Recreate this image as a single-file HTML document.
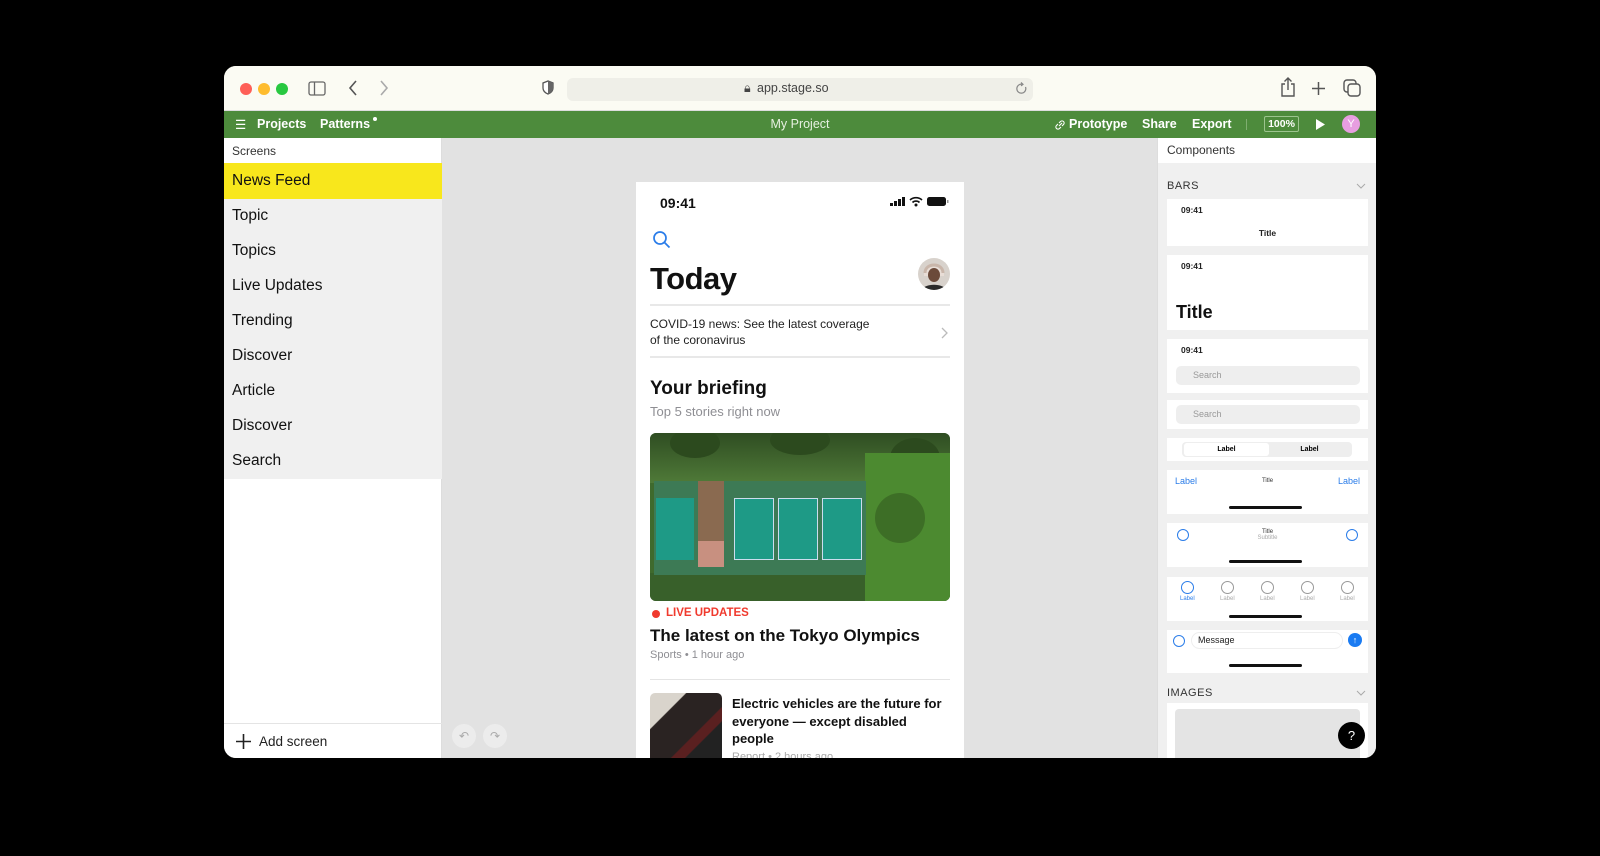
<!DOCTYPE html>
<html><head><meta charset="utf-8"><style>
*{box-sizing:border-box;margin:0;padding:0}
body{width:1600px;height:856px;background:#000;font-family:"Liberation Sans",sans-serif;position:relative;overflow:hidden}
.a{position:absolute}
.win{left:224px;top:66px;width:1152px;height:692px;border-radius:12px;overflow:hidden;background:#fcfcf5}
.g{color:#fff;font-size:12.5px;top:6px;font-weight:bold}
.side div.it{position:absolute;left:8px;font-size:15.5px;color:#111}
.card{position:absolute;left:9px;width:201px;background:#fff}
.sb{font-size:8.5px;font-weight:bold;color:#222}
.circ{position:absolute;width:12px;height:12px;border:1.5px solid #2b7de9;border-radius:50%}
.gc{border-color:#999}
.hb{position:absolute;left:62px;width:73px;height:3px;background:#111;border-radius:2px}
.lbl{position:absolute;font-size:6px;color:#aaa}
.tr{position:absolute;border-radius:50%;background:#2c4a1e}
</style></head><body>
<div class="a win">
 <div class="a" style="left:0;top:0;width:1152px;height:45px;background:#fbfbf3;border-bottom:1px solid #ddd"></div>
 <div class="a" style="left:16px;top:17px;width:12px;height:12px;border-radius:50%;background:#fe5f57"></div>
 <div class="a" style="left:34px;top:17px;width:12px;height:12px;border-radius:50%;background:#febc2e"></div>
 <div class="a" style="left:52px;top:17px;width:12px;height:12px;border-radius:50%;background:#28c840"></div>
 <svg class="a" style="left:84px;top:15px" width="18" height="15"><rect x="1" y="1" width="16" height="13" rx="2" fill="none" stroke="#666" stroke-width="1.3"/><line x1="6.5" y1="1" x2="6.5" y2="14" stroke="#666" stroke-width="1.3"/></svg>
 <svg class="a" style="left:124px;top:14px" width="10" height="16"><path d="M8 1L2 8l6 7" fill="none" stroke="#555" stroke-width="1.6"/></svg>
 <svg class="a" style="left:155px;top:14px" width="10" height="16"><path d="M2 1l6 7-6 7" fill="none" stroke="#aaa" stroke-width="1.6"/></svg>
 <svg class="a" style="left:318px;top:14px" width="12" height="15"><path d="M6 1L1 3v5c0 3 2.5 5 5 6 2.5-1 5-3 5-6V3z" fill="#fff" stroke="#555" stroke-width="1.3"/><path d="M6 1v13c2.5-1 5-3 5-6V3z" fill="#666"/></svg>
 <div class="a" style="left:343px;top:12px;width:466px;height:23px;border-radius:6px;background:#efefe8"></div>
 <div class="a" style="left:520px;top:15px;font-size:12.5px;color:#444">🔒︎</div>
 <div class="a" style="left:533px;top:15px;font-size:12.5px;color:#444">app.stage.so</div>
 <svg class="a" style="left:791px;top:16px" width="13" height="13"><path d="M10.5 5A4.5 4.5 0 1 1 7 2.2" fill="none" stroke="#888" stroke-width="1.2"/><path d="M6 0.5l2 1.8-2 1.6" fill="none" stroke="#888" stroke-width="1.2"/></svg>
 <svg class="a" style="left:1056px;top:11px" width="16" height="20"><path d="M5 7H2v12h12V7h-3M8 1v12M4.5 4.5L8 1l3.5 3.5" fill="none" stroke="#555" stroke-width="1.4"/></svg>
 <svg class="a" style="left:1087px;top:15px" width="15" height="15"><path d="M7.5 1v13M1 7.5h13" stroke="#555" stroke-width="1.5"/></svg>
 <svg class="a" style="left:1119px;top:13px" width="18" height="18"><rect x="1" y="1" width="12" height="12" rx="3" fill="none" stroke="#555" stroke-width="1.4"/><rect x="5" y="5" width="12" height="12" rx="3" fill="#fbfbf3" stroke="#555" stroke-width="1.4"/></svg>
 <div class="a" style="left:0;top:45px;width:1152px;height:27px;background:#4d8b3c">
  <div class="a g" style="left:11px;font-weight:normal">☰</div>
  <div class="a g" style="left:33px">Projects</div>
  <div class="a g" style="left:96px">Patterns</div>
  <div class="a" style="left:149px;top:6px;width:4px;height:4px;border-radius:50%;background:#fff"></div>
  <div class="a g" style="left:0;width:1152px;text-align:center;font-weight:normal;color:#e6f0e0">My Project</div>
  <svg class="a" style="left:830px;top:8px" width="12" height="12"><path d="M5 7l3-3M4 5L2.5 6.5a2 2 0 0 0 3 3L7 8M8 7l1.5-1.5a2 2 0 0 0-3-3L5 4" fill="none" stroke="#fff" stroke-width="1.1"/></svg>
  <div class="a g" style="left:845px">Prototype</div>
  <div class="a g" style="left:918px">Share</div>
  <div class="a g" style="left:968px">Export</div>
  <div class="a" style="left:1022px;top:8px;width:1px;height:11px;background:#7fae70"></div>
  <div class="a" style="left:1040px;top:5px;width:35px;height:16px;border:1px solid #9cc48e;border-radius:2px;color:#fff;font-size:10.5px;text-align:center;line-height:14px;font-weight:bold">100%</div>
  <svg class="a" style="left:1091px;top:8px" width="10" height="11"><path d="M1 0l9 5.5-9 5.5z" fill="#fff"/></svg>
  <div class="a" style="left:1118px;top:4px;width:18px;height:18px;border-radius:50%;background:#e79ee0;color:#fff;font-size:11px;text-align:center;line-height:18px">Y</div>
 </div>
 <div class="a side" style="left:0;top:72px;width:218px;height:620px;background:#fff;border-right:1px solid #ddd">
  <div class="a" style="left:8px;top:6px;font-size:12px;color:#333">Screens</div>
  <div class="a" style="left:0;top:25px;width:218px;height:316px;background:#f0f0f0"></div>
  <div class="a" style="left:0;top:25px;width:218px;height:36px;background:#f8e71c"></div>
  <div class="it" style="top:34px">News Feed</div>
  <div class="it" style="top:69px">Topic</div>
  <div class="it" style="top:104px">Topics</div>
  <div class="it" style="top:139px">Live Updates</div>
  <div class="it" style="top:174px">Trending</div>
  <div class="it" style="top:209px">Discover</div>
  <div class="it" style="top:244px">Article</div>
  <div class="it" style="top:279px">Discover</div>
  <div class="it" style="top:314px">Search</div>
  <div class="a" style="left:0;top:585px;width:218px;height:1px;background:#e4e4e4"></div>
  <svg class="a" style="left:12px;top:596px" width="15" height="15"><path d="M7.5 0v15M0 7.5h15" stroke="#222" stroke-width="1.6"/></svg>
  <div class="a" style="left:35px;top:596px;font-size:13.5px;color:#222">Add screen</div>
 </div>
 <div class="a" style="left:218px;top:72px;width:715px;height:620px;background:#e2e2e2">
  <div class="a" style="left:10px;top:586px;width:24px;height:24px;border-radius:50%;background:#ececec;color:#aaa;font-size:12px;text-align:center;line-height:24px">↶</div>
  <div class="a" style="left:41px;top:586px;width:24px;height:24px;border-radius:50%;background:#ececec;color:#aaa;font-size:12px;text-align:center;line-height:24px">↷</div>
 </div>
 <div class="a" style="left:412px;top:116px;width:328px;height:580px;background:#fff;overflow:hidden">
  <div class="a" style="left:24px;top:13px;font-size:14px;font-weight:bold;color:#111">09:41</div>
  <svg class="a" style="left:254px;top:14px" width="60" height="12"><rect x="0" y="7" width="3" height="3" fill="#111"/><rect x="4" y="5" width="3" height="5" fill="#111"/><rect x="8" y="3" width="3" height="7" fill="#111"/><rect x="12" y="1" width="3" height="9" fill="#111"/><path d="M20 4a9 9 0 0 1 12 0M22.5 6.5a5 5 0 0 1 7 0" fill="none" stroke="#111" stroke-width="1.6"/><circle cx="26" cy="9" r="1.5" fill="#111"/><rect x="37" y="1" width="19" height="9" rx="2.5" fill="#111"/><rect x="57" y="4" width="1.5" height="3" fill="#999"/></svg>
  <svg class="a" style="left:16px;top:48px" width="20" height="20"><circle cx="8" cy="8" r="6" fill="none" stroke="#2b7de9" stroke-width="1.7"/><path d="M12.5 12.5l5 5" stroke="#2b7de9" stroke-width="1.8"/></svg>
  <div class="a" style="left:14px;top:79px;font-size:31px;font-weight:bold;color:#111;letter-spacing:-0.5px">Today</div>
  <svg class="a" style="left:282px;top:76px" width="32" height="32"><defs><clipPath id="c"><circle cx="16" cy="16" r="16"/></clipPath></defs><g clip-path="url(#c)"><rect width="32" height="32" fill="#d8d2cc"/><path d="M6 14c0-7 20-7 20 0v4H6z" fill="#e8ddd6"/><ellipse cx="16" cy="17" rx="6" ry="7" fill="#6b4a3a"/><path d="M4 32c2-7 22-7 24 0z" fill="#2a2a2a"/><path d="M7 15c0-5 4-8 9-8s9 3 9 8" fill="none" stroke="#c9b6aa" stroke-width="3"/></g></svg>
  <div class="a" style="left:14px;top:122px;width:300px;height:2px;background:#e8e8e8"></div>
  <div class="a" style="left:14px;top:134px;font-size:12px;color:#222;line-height:16px">COVID-19 news: See the latest coverage<br>of the coronavirus</div>
  <svg class="a" style="left:305px;top:145px" width="8" height="12"><path d="M1 1l5 5-5 5" fill="none" stroke="#bbb" stroke-width="1.3"/></svg>
  <div class="a" style="left:14px;top:174px;width:300px;height:2px;background:#e8e8e8"></div>
  <div class="a" style="left:14px;top:196px;font-size:19px;font-weight:bold;color:#111">Your briefing</div>
  <div class="a" style="left:14px;top:222px;font-size:13px;color:#8e8e93">Top 5 stories right now</div>
  <div class="a" style="left:14px;top:251px;width:300px;height:168px;border-radius:6px;overflow:hidden;background:#3f6a2d">
   <div class="a" style="left:0;top:0;width:300px;height:50px;background:linear-gradient(#2f4d22,#4f7a38)"></div>
   <div class="tr" style="left:20px;top:-5px;width:50px;height:30px"></div>
   <div class="tr" style="left:120px;top:-8px;width:60px;height:30px"></div>
   <div class="tr" style="left:240px;top:5px;width:50px;height:40px"></div>
   <div class="a" style="left:0;top:140px;width:300px;height:28px;background:#38602a"></div>
   <div class="a" style="left:215px;top:20px;width:85px;height:148px;background:#4c8a30"></div>
   <div class="tr" style="left:225px;top:60px;width:50px;height:50px;background:#3d6e26"></div>
   <div class="a" style="left:4px;top:48px;width:212px;height:94px;background:#3d7a55"></div>
   <div class="a" style="left:48px;top:48px;width:26px;height:60px;background:#8a6a50"></div>
   <div class="a" style="left:48px;top:108px;width:26px;height:26px;background:#c89080"></div>
   <div class="a" style="left:6px;top:65px;width:38px;height:62px;background:#1e9a86"></div>
   <div class="a" style="left:84px;top:65px;width:40px;height:62px;background:#1e9a86;border:1px solid #cde"></div>
   <div class="a" style="left:128px;top:65px;width:40px;height:62px;background:#1e9a86;border:1px solid #cde"></div>
   <div class="a" style="left:172px;top:65px;width:40px;height:62px;background:#1e9a86;border:1px solid #cde"></div>
  </div>
  <div class="a" style="left:16px;top:428px;width:8px;height:8px;border-radius:50%;background:#f03a2e"></div>
  <div class="a" style="left:30px;top:425px;font-size:11.5px;font-weight:bold;color:#f03a2e">LIVE UPDATES</div>
  <div class="a" style="left:14px;top:444px;font-size:17px;font-weight:bold;color:#111">The latest on the Tokyo Olympics</div>
  <div class="a" style="left:14px;top:467px;font-size:11px;color:#8e8e93">Sports • 1 hour ago</div>
  <div class="a" style="left:14px;top:497px;width:300px;height:1px;background:#e4e4e4"></div>
  <div class="a" style="left:14px;top:511px;width:72px;height:70px;border-radius:5px;background:linear-gradient(135deg,#d9d4cc 0 25%,#2a2322 26% 60%,#5a2020 61% 70%,#222 71%)"></div>
  <div class="a" style="left:96px;top:513px;font-size:13px;font-weight:bold;color:#111;line-height:17.5px">Electric vehicles are the future for<br>everyone — except disabled<br>people</div>
  <div class="a" style="left:96px;top:569px;font-size:11px;color:#aaa">Report • 2 hours ago</div>
 </div>
 <div class="a" style="left:933px;top:72px;width:219px;height:620px;background:#f0f0f0;border-left:1px solid #ddd">
  <div class="a" style="left:0;top:0;width:219px;height:25px;background:#fff"></div>
  <div class="a" style="left:9px;top:5px;font-size:12px;color:#333">Components</div>
  <div class="a" style="left:9px;top:42px;font-size:11px;color:#333;letter-spacing:.5px">BARS</div>
  <svg class="a" style="left:198px;top:45px" width="10" height="6"><path d="M1 1l4 4 4-4" fill="none" stroke="#aaa"/></svg>
  <div class="card" style="top:61px;height:47px"><div class="a sb" style="left:14px;top:6px">09:41</div><div class="a sb" style="left:0;width:201px;top:29px;text-align:center">Title</div></div>
  <div class="card" style="top:117px;height:75px"><div class="a sb" style="left:14px;top:6px">09:41</div><div class="a" style="left:9px;top:47px;font-size:18px;font-weight:bold;color:#111">Title</div></div>
  <div class="card" style="top:201px;height:54px"><div class="a sb" style="left:14px;top:6px">09:41</div><div class="a" style="left:9px;top:27px;width:184px;height:19px;border-radius:5px;background:#eee;font-size:9px;color:#999;line-height:19px;padding-left:17px">Search</div></div>
  <div class="card" style="top:262px;height:29px"><div class="a" style="left:9px;top:5px;width:184px;height:19px;border-radius:5px;background:#eee;font-size:9px;color:#999;line-height:19px;padding-left:17px">Search</div></div>
  <div class="card" style="top:300px;height:23px"><div class="a" style="left:15px;top:4px;width:170px;height:15px;border-radius:4px;background:#eee"></div><div class="a" style="left:17px;top:5px;width:85px;height:13px;border-radius:3px;background:#fff;font-size:7px;font-weight:bold;text-align:center;line-height:13px">Label</div><div class="a" style="left:100px;top:5px;width:85px;font-size:7px;font-weight:bold;text-align:center;line-height:13px">Label</div></div>
  <div class="card" style="top:332px;height:44px"><div class="a" style="left:8px;top:6px;font-size:9px;color:#2b7de9">Label</div><div class="a" style="left:0;width:201px;top:8px;text-align:center;font-size:6px;color:#333">Title</div><div class="a" style="right:8px;top:6px;font-size:9px;color:#2b7de9">Label</div><div class="hb" style="top:36px"></div></div>
  <div class="card" style="top:385px;height:44px"><div class="circ" style="left:10px;top:6px"></div><div class="a" style="left:0;width:201px;top:6px;text-align:center;font-size:6px;color:#333">Title<br><span style="color:#aaa">Subtitle</span></div><div class="circ" style="right:10px;top:6px"></div><div class="hb" style="top:37px"></div></div>
  <div class="card" style="top:439px;height:44px">
   <div class="circ" style="left:14px;top:4px;width:13px;height:13px"></div><div class="lbl" style="left:13px;top:19px;color:#2b7de9">Label</div>
   <div class="circ gc" style="left:54px;top:4px;width:13px;height:13px"></div><div class="lbl" style="left:53px;top:19px">Label</div>
   <div class="circ gc" style="left:94px;top:4px;width:13px;height:13px"></div><div class="lbl" style="left:93px;top:19px">Label</div>
   <div class="circ gc" style="left:134px;top:4px;width:13px;height:13px"></div><div class="lbl" style="left:133px;top:19px">Label</div>
   <div class="circ gc" style="left:174px;top:4px;width:13px;height:13px"></div><div class="lbl" style="left:173px;top:19px">Label</div>
   <div class="hb" style="top:38px"></div></div>
  <div class="card" style="top:492px;height:43px"><div class="circ" style="left:6px;top:5px"></div><div class="a" style="left:24px;top:2px;width:152px;height:17px;border:1px solid #eee;border-radius:9px;font-size:9px;color:#222;line-height:15px;padding-left:6px">Message</div><div class="a" style="left:181px;top:3px;width:14px;height:14px;border-radius:50%;background:#1a7bf2;color:#fff;font-size:9px;text-align:center;line-height:14px;font-weight:bold">↑</div><div class="hb" style="top:34px"></div></div>
  <div class="a" style="left:9px;top:549px;font-size:11px;color:#333;letter-spacing:.5px">IMAGES</div>
  <svg class="a" style="left:198px;top:552px" width="10" height="6"><path d="M1 1l4 4 4-4" fill="none" stroke="#aaa"/></svg>
  <div class="card" style="top:565px;height:60px"><div class="a" style="left:8px;top:6px;width:185px;height:60px;border-radius:4px;background:#e4e4e4"></div></div>
  <div class="a" style="left:180px;top:584px;width:27px;height:27px;border-radius:50%;background:#000;color:#fff;font-size:13px;text-align:center;line-height:27px">?</div>
 </div>
</div>
</body></html>
